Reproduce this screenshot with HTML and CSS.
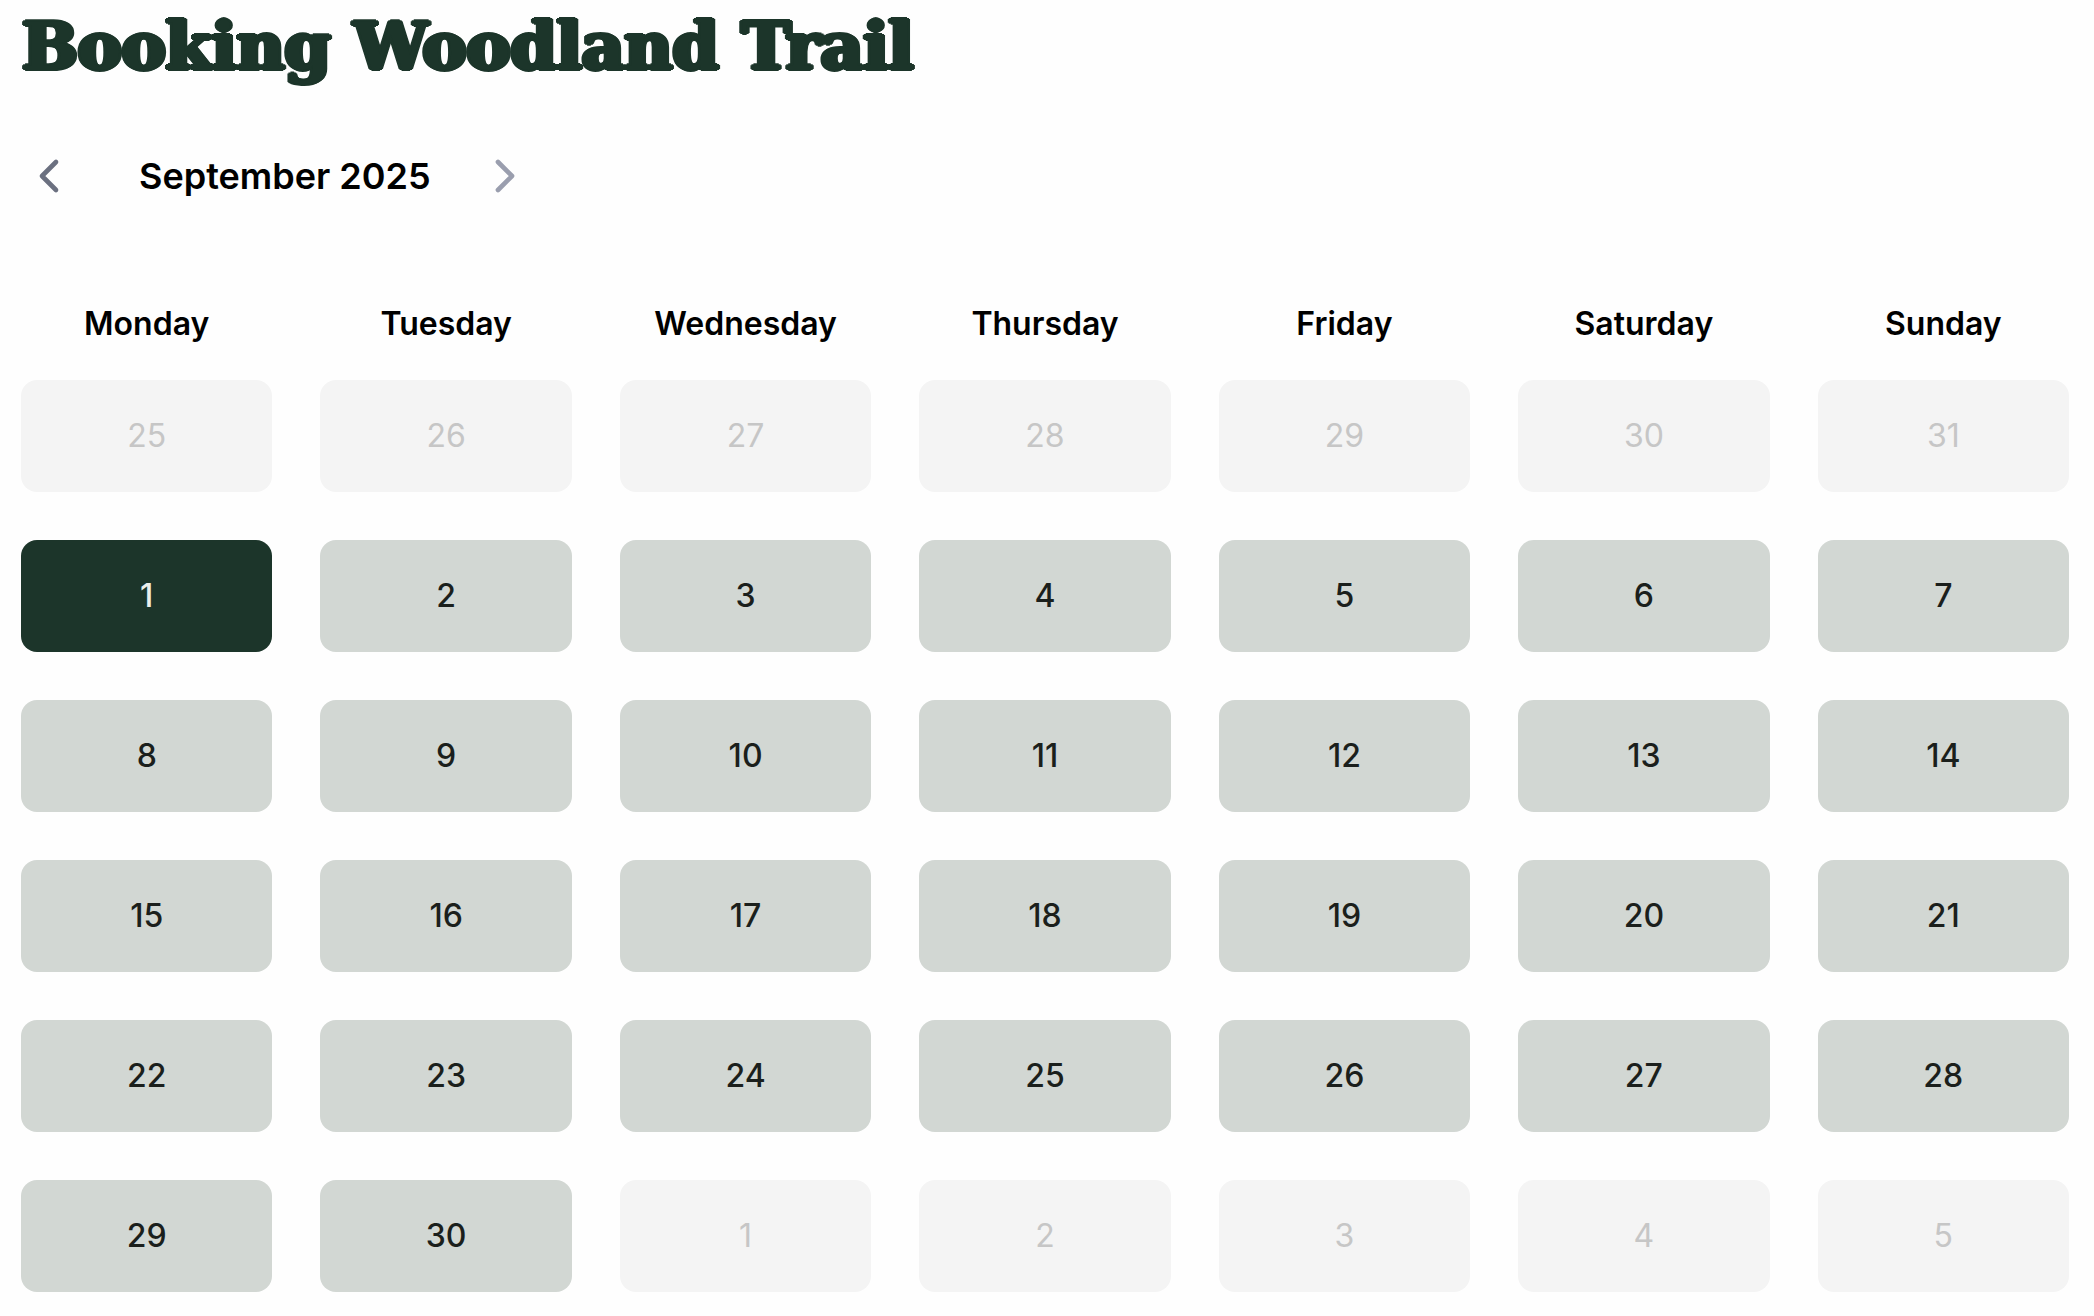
FILE: index.html
```html
<!DOCTYPE html>
<html lang="en">
<head>
<meta charset="utf-8">
<meta name="viewport" content="width=device-width, initial-scale=1">
<title>Booking Woodland Trail</title>
<link rel="stylesheet" href="styles.css">
</head>
<body>
<main class="booking">
  <h1 class="title">Booking Woodland Trail</h1>
  <nav class="month-nav" aria-label="Month">
    <button class="nav-button" type="button" aria-label="Previous month">
      <svg class="chevron" viewBox="0 0 24 24"><path d="M15 18 9 12l6-6"/></svg>
    </button>
    <h2 class="month">September 2025</h2>
    <button class="nav-button nav-next" type="button" aria-label="Next month">
      <svg class="chevron" viewBox="0 0 24 24"><path d="m9 18 6-6-6-6"/></svg>
    </button>
  </nav>
  <table class="calendar">
    <thead>
      <tr class="week"><th>Monday</th><th>Tuesday</th><th>Wednesday</th><th>Thursday</th><th>Friday</th><th>Saturday</th><th>Sunday</th></tr>
    </thead>
    <tbody class="weeks">
      <tr class="week">
        <td><button class="day" disabled>25</button></td>
        <td><button class="day" disabled>26</button></td>
        <td><button class="day" disabled>27</button></td>
        <td><button class="day" disabled>28</button></td>
        <td><button class="day" disabled>29</button></td>
        <td><button class="day" disabled>30</button></td>
        <td><button class="day" disabled>31</button></td>
      </tr>
      <tr class="week">
        <td><button class="day selected" aria-pressed="true">1</button></td>
        <td><button class="day">2</button></td>
        <td><button class="day">3</button></td>
        <td><button class="day">4</button></td>
        <td><button class="day">5</button></td>
        <td><button class="day">6</button></td>
        <td><button class="day">7</button></td>
      </tr>
      <tr class="week">
        <td><button class="day">8</button></td>
        <td><button class="day">9</button></td>
        <td><button class="day">10</button></td>
        <td><button class="day">11</button></td>
        <td><button class="day">12</button></td>
        <td><button class="day">13</button></td>
        <td><button class="day">14</button></td>
      </tr>
      <tr class="week">
        <td><button class="day">15</button></td>
        <td><button class="day">16</button></td>
        <td><button class="day">17</button></td>
        <td><button class="day">18</button></td>
        <td><button class="day">19</button></td>
        <td><button class="day">20</button></td>
        <td><button class="day">21</button></td>
      </tr>
      <tr class="week">
        <td><button class="day">22</button></td>
        <td><button class="day">23</button></td>
        <td><button class="day">24</button></td>
        <td><button class="day">25</button></td>
        <td><button class="day">26</button></td>
        <td><button class="day">27</button></td>
        <td><button class="day">28</button></td>
      </tr>
      <tr class="week">
        <td><button class="day">29</button></td>
        <td><button class="day">30</button></td>
        <td><button class="day" disabled>1</button></td>
        <td><button class="day" disabled>2</button></td>
        <td><button class="day" disabled>3</button></td>
        <td><button class="day" disabled>4</button></td>
        <td><button class="day" disabled>5</button></td>
      </tr>
    </tbody>
  </table>
</main>
</body>
</html>
```
FILE: styles.css
```css
* {
  box-sizing: border-box;
}

body {
  margin: 0;
  background: #fefefe;
  color: #000;
  font-family: Inter, "Liberation Sans", sans-serif;
}

.booking {
  padding: 6px 25px 24px 21px;
}

/* The shadows thicken the serif letters and round their corners. */
.title {
  margin: 0 0 62px;
  padding-left: 1px;
  color: #1c352a;
  font: 700 66px/80px "DejaVu Serif", serif;
  text-shadow:
    3px 0 #1c352a, -3px 0 #1c352a,
    0 2px #1c352a, 0 -2px #1c352a,
    2px 1px #1c352a, -2px 1px #1c352a,
    2px -1px #1c352a, -2px -1px #1c352a;
}

.month-nav {
  display: flex;
  align-items: center;
  margin-bottom: 96px;
}

.nav-button {
  display: flex;
  padding: 0;
  border: 0;
  background: none;
  color: #6b7080;
  cursor: pointer;
}

.nav-next {
  color: #9a9eae;
}

.chevron {
  width: 56px;
  height: 56px;
  fill: none;
  stroke: currentColor;
  stroke-width: 2;
  stroke-linecap: round;
  stroke-linejoin: round;
}

.month {
  margin: 0 46px 0 62px;
  font-size: 36px;
  font-weight: 600;
  line-height: 48px;
}

.calendar {
  display: block;
}

.weeks {
  display: grid;
  gap: 48px;
  margin-top: 32px;
}

.calendar thead {
  display: block;
}

.week {
  display: grid;
  grid-template-columns: repeat(7, minmax(0, 1fr));
  gap: 48px;
}

.calendar th,
.calendar td {
  display: block;
  padding: 0;
}

.calendar th {
  font-size: 32px;
  font-weight: 600;
  line-height: 48px;
}

.day {
  display: block;
  width: 100%;
  height: 112px;
  padding: 0;
  border: 0;
  border-radius: 16px;
  background: #d2d7d3;
  color: #1b1f1c;
  font: 500 32px/48px Inter, "Liberation Sans", sans-serif;
  cursor: pointer;
}

.day.selected {
  background: #1c352a;
  color: #eceeea;
}

.day:disabled {
  background: #f4f4f4;
  color: #c6c6c6;
  font-weight: 400;
  cursor: default;
}
```
